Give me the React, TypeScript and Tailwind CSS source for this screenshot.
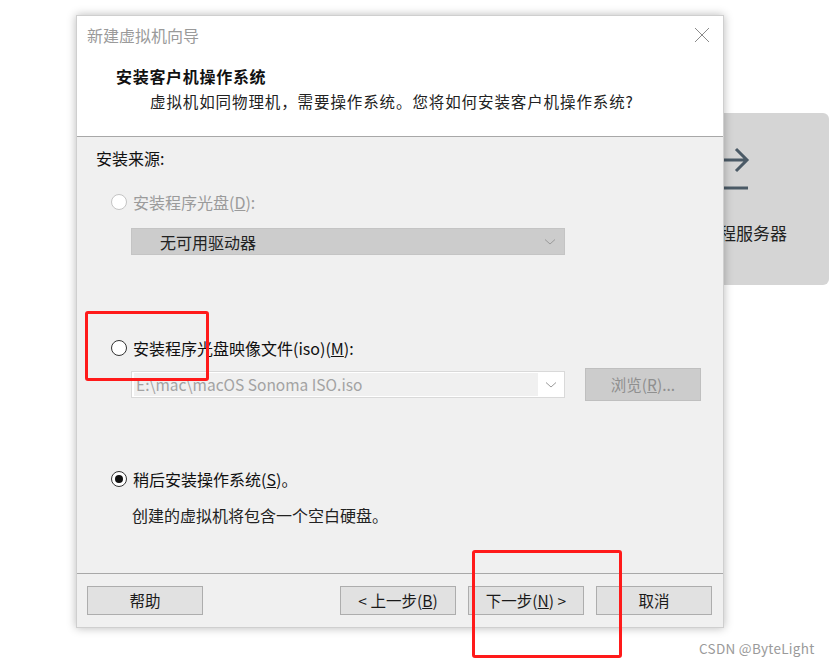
import React from "react";

const font = { fontFamily: '"Noto Sans CJK SC", "Noto Sans", sans-serif' };

function Radio({ state }: { state: "disabled" | "off" | "on" }) {
  if (state === "disabled")
    return <span className="w-[16px] h-[16px] rounded-full border border-[#c4c4c4] bg-white shrink-0" />;
  if (state === "off")
    return <span className="w-[16px] h-[16px] rounded-full border border-[#333333] bg-white shrink-0" />;
  return (
    <span className="w-[16px] h-[16px] rounded-full border border-[#333333] bg-white shrink-0 flex items-center justify-center">
      <span className="w-[8px] h-[8px] rounded-full bg-[#111111]" />
    </span>
  );
}

function Chevron({ color }: { color: string }) {
  return (
    <svg width="12" height="8" viewBox="0 0 12 8">
      <path d="M1 1.5 L6 6 L11 1.5" fill="none" stroke={color} strokeWidth="1" />
    </svg>
  );
}

function Btn({ children }: { children: React.ReactNode }) {
  return (
    <div className="w-[116px] h-[29px] bg-[#e1e1e1] border border-[#adadad] flex items-center justify-center text-[15.5px] text-[#1a1a1a]">
      {children}
    </div>
  );
}

export default function App() {
  return (
    <div className="relative w-[830px] h-[666px] bg-white overflow-hidden" style={font}>
      {/* background card */}
      <div className="absolute left-[640px] top-[113px] w-[189px] h-[172px] bg-[#d5d5d5] rounded-[6px]">
        <svg className="absolute left-[80px] top-[33px]" width="30" height="46" viewBox="0 0 30 46">
          <path d="M2 14 H26 M16 3 L27 14 L16 25" fill="none" stroke="#4b5a66" strokeWidth="3" />
          <path d="M2 42 H28" stroke="#4b5a66" strokeWidth="3" />
        </svg>
        <div className="absolute right-[42px] top-[107px] text-[17px] text-[#222] whitespace-nowrap">远程服务器</div>
      </div>

      {/* dialog */}
      <div className="absolute left-[76px] top-[15px] w-[648px] h-[613px] bg-[#f0f0f0] border border-[#cfcfcf] shadow-[0_0_9px_rgba(0,0,0,0.28)] flex flex-col">
        <div className="h-[37px] bg-white flex items-center justify-between pl-[10px] pr-[13px]">
          <span className="text-[16px] text-[#9a9a9a]">新建虚拟机向导</span>
          <svg width="16" height="16" viewBox="0 0 16 16">
            <path d="M1 1 L15 15 M15 1 L1 15" stroke="#8a8a8a" strokeWidth="1" />
          </svg>
        </div>
        <div className="h-[84px] bg-white border-b border-[#a8a8a8] pl-[39px] pt-[12px]">
          <div className="text-[16px] font-bold text-[#111] leading-[22px] tracking-[0.7px]">安装客户机操作系统</div>
          <div className="text-[15.5px] text-[#222] leading-[22px] pl-[34px] mt-[3px] tracking-[0.9px]">
            虚拟机如同物理机，需要操作系统。您将如何安装客户机操作系统?
          </div>
        </div>
        <div className="flex-1 flex flex-col pl-[19px] pt-[11px] border-b border-[#a8a8a8]">
          <div className="text-[16px] leading-[20px] text-[#111]">安装来源:</div>
          <div className="flex items-center gap-[6px] pl-[15px] mt-[24px] h-[20px]">
            <Radio state="disabled" />
            <span className="text-[16px] text-[#9b9b9b]">
              安装程序光盘(<u>D</u>):
            </span>
          </div>
          <div className="ml-[35px] mt-[16px] w-[434px] h-[27px] bg-[#cccccc] border border-[#c4c4c4] flex items-center justify-between pl-[28px] pr-[8px]">
            <span className="text-[16px] text-[#222]">无可用驱动器</span>
            <Chevron color="#9a9a9a" />
          </div>
          <div className="flex items-center gap-[6px] pl-[15px] mt-[83px] h-[20px]">
            <Radio state="off" />
            <span className="text-[16px] text-[#111]">
              安装程序光盘映像文件(iso)(<u>M</u>):
            </span>
          </div>
          <div className="flex items-center mt-[10px] h-[33px]">
            <div className="ml-[35px] w-[434px] h-[27px] bg-white border border-[#d9d9d9] flex items-center">
              <div className="flex-1 h-[23px] ml-[2px] bg-[#f0f0f0] flex items-center pl-[2px] text-[15.5px] text-[#a3a3a3] whitespace-nowrap">
                E:\mac\macOS Sonoma ISO.iso
              </div>
              <div className="w-[26px] flex items-center justify-center">
                <Chevron color="#9a9a9a" />
              </div>
            </div>
            <div className="ml-[20px] w-[116px] h-[33px] bg-[#cccccc] border border-[#bfbfbf] flex items-center justify-center text-[15.5px] text-[#8f8f8f]">
              浏览(<u>R</u>)...
            </div>
          </div>
          <div className="flex items-center gap-[6px] pl-[15px] mt-[68px] h-[20px]">
            <Radio state="on" />
            <span className="text-[16px] text-[#111]">
              稍后安装操作系统(<u>S</u>)。
            </span>
          </div>
          <div className="pl-[36px] mt-[16px] text-[16px] text-[#222] leading-[20px]">创建的虚拟机将包含一个空白硬盘。</div>
        </div>
        <div className="h-[53px] flex items-start pt-[12px] pl-[10px] pr-[11px]">
          <Btn>帮助</Btn>
          <div className="flex-1" />
          <div className="flex gap-[12px]">
            <Btn>
              &lt; 上一步(<u>B</u>)
            </Btn>
            <Btn>
              下一步(<u>N</u>) &gt;
            </Btn>
            <Btn>取消</Btn>
          </div>
        </div>
      </div>

      {/* annotations */}
      <div className="absolute left-[85px] top-[311px] w-[124px] h-[70px] border-[3px] border-[#ff1a1a] rounded-[3px]" />
      <div className="absolute left-[472px] top-[550px] w-[150px] h-[108px] border-[3px] border-[#ff1a1a] rounded-[3px]" />
      <div className="absolute left-[699px] top-[638px] text-[13.5px] text-[#9a9a9a] tracking-[0.3px]">CSDN @ByteLight</div>
    </div>
  );
}
